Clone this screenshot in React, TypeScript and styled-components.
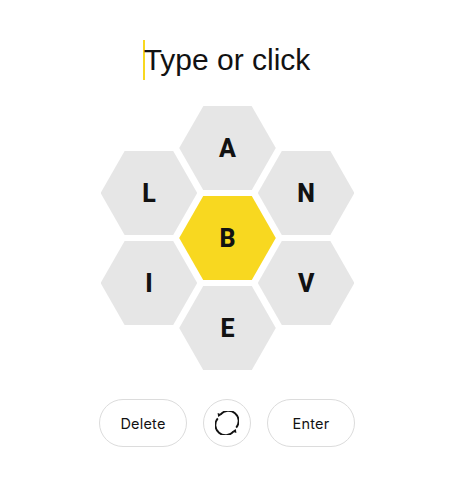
import React from "react";
import styled, { createGlobalStyle } from "styled-components";

const outerLeft = ["L", "I"];
const middle = ["A", "B", "E"];
const outerRight = ["N", "V"];

const App = () => {
  return (
    <Page>
      <GlobalStyle />
      <InputRow>
        <Caret />
        <Placeholder>Type or click</Placeholder>
      </InputRow>

      <Hive>
        <Column>
          {outerLeft.map((l) => (
            <Cell key={l}>{l}</Cell>
          ))}
        </Column>
        <Column>
          {middle.map((l) => (
            <Cell key={l} $center={l === "B"}>
              {l}
            </Cell>
          ))}
        </Column>
        <Column>
          {outerRight.map((l) => (
            <Cell key={l}>{l}</Cell>
          ))}
        </Column>
      </Hive>

      <Controls>
        <PillButton>Delete</PillButton>
        <RoundButton aria-label="Shuffle">
          <svg width="24" height="24" viewBox="0 0 24 24" fill="none">
            <path
              d="M5.6 3.4 A 10.2 10.2 0 0 1 21.2 16.6"
              stroke="#121212"
              strokeWidth="1.8"
            />
            <path
              d="M18.4 20.6 A 10.2 10.2 0 0 1 2.8 7.4"
              stroke="#121212"
              strokeWidth="1.8"
            />
            <path d="M2.6 2 L7 3.4 L3.2 6 Z" fill="#121212" />
            <path d="M21.4 22 L17 20.6 L20.8 18 Z" fill="#121212" />
          </svg>
        </RoundButton>
        <PillButton>Enter</PillButton>
      </Controls>
    </Page>
  );
};

export default App;

const GlobalStyle = createGlobalStyle`
  html, body {
    margin: 0;
    padding: 0;
    background-color: #fff;
  }
`;

const Page = styled.div`
  width: 454px;
  height: 488px;
  display: flex;
  flex-direction: column;
  align-items: center;
  overflow: hidden;
  color: #121212;
`;

const InputRow = styled.div`
  display: flex;
  align-items: center;
  height: 40px;
  margin-top: 40px;
  margin-right: 1px;
`;

const Caret = styled.span`
  width: 2px;
  height: 40px;
  margin-right: -1px;
  background-color: #f8d820;
`;

const Placeholder = styled.span`
  font-family: "Liberation Sans", Arial, sans-serif;
  font-size: 30px;
  line-height: 38px;
  color: #121212;
`;

const Hive = styled.div`
  display: flex;
  align-items: center;
  margin-top: 26px;
  margin-left: 1px;
  height: 264px;
`;

const Column = styled.div`
  display: flex;
  flex-direction: column;
  gap: 5.7px;
  margin-right: -18px;

  &:last-child {
    margin-right: 0;
  }
`;

const Cell = styled.div<{ $center?: boolean }>`
  width: 96.6px;
  height: 84.3px;
  padding-top: 1px;
  box-sizing: border-box;
  display: flex;
  align-items: center;
  justify-content: center;
  clip-path: polygon(25% 0, 75% 0, 100% 50%, 75% 100%, 25% 100%, 0 50%);
  background-color: ${(p) => (p.$center ? "#f8d820" : "#e6e6e6")};
  font-family: Roboto, "Liberation Sans", sans-serif;
  font-size: 25px;
  font-weight: 800;
  color: #121212;
`;

const Controls = styled.div`
  display: flex;
  gap: 16px;
  margin-top: 29px;
`;

const PillButton = styled.button`
  width: 88px;
  height: 48px;
  padding: 0;
  border: 1px solid #dcdcdc;
  border-radius: 24px;
  background-color: #fff;
  font-family: Inter, sans-serif;
  font-size: 14.5px;
  letter-spacing: 0.2px;
  color: #121212;
`;

const RoundButton = styled(PillButton)`
  width: 48px;
  display: flex;
  align-items: center;
  justify-content: center;
`;
